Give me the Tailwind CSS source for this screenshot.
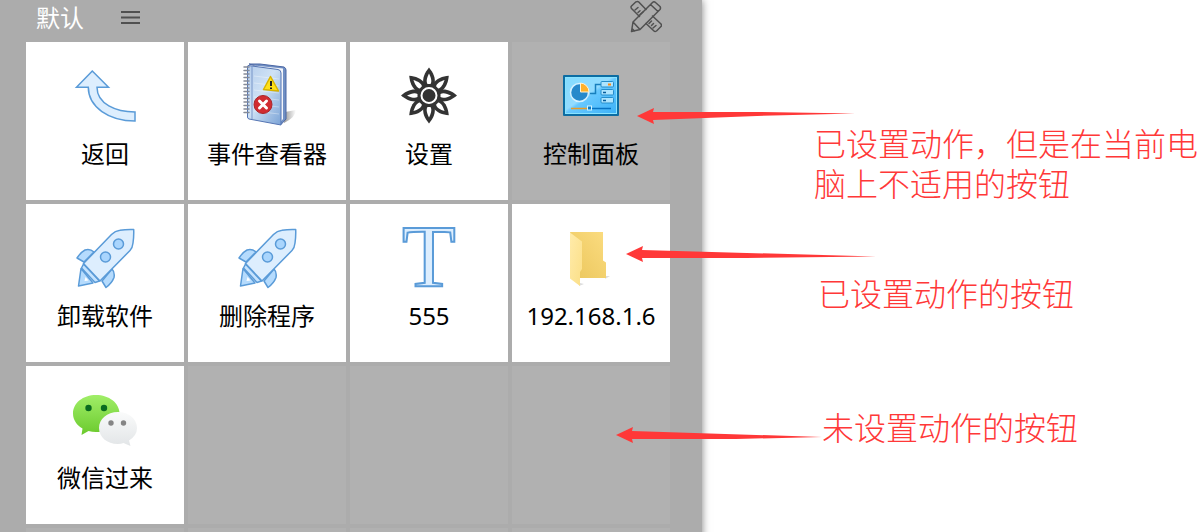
<!DOCTYPE html>
<html lang="zh-CN">
<head>
    <meta charset="UTF-8">
    <meta name="viewport" content="width=device-width, initial-scale=1.0">
    <title>默认</title>
    <script src="https://cdn.jsdelivr.net/npm/@tailwindcss/browser@4"></script>
</head>
<body class="bg-white font-['Noto_Sans','Noto_Sans_CJK_SC',sans-serif]">
    <main class="relative flex h-screen overflow-hidden">
        <!-- button panel -->
        <section class="shrink-0 self-start bg-[#acacac] pl-[26px] pr-8 shadow-[0_0_8px_#00000080]">
            <header class="flex h-[42px] items-start justify-between pl-[10px] pr-2">
                <div class="flex items-center gap-9">
                    <h1 class="text-2xl leading-9 text-white">默认</h1>
                    <button aria-label="菜单">
                        <svg class="block" width="20" height="16" viewBox="0 0 20 16" stroke="#505050" stroke-width="2">
                            <path d="M1 2H20M1 7.500H20M1 13H20"/>
                        </svg>
                    </button>
                </div>
                <button aria-label="编辑">
                    <svg class="block" width="32" height="33" viewBox="0 0 32 33" fill="none" stroke="#505050" stroke-width="1.500" stroke-linejoin="round" stroke-linecap="round">
                        <path d="M9.500 16.500L1.500 8.500Q.5 7 1.500 6L6 1.800Q7.500 1 8.500 1.800L16 9.500M22.500 16L31 24Q32 25.500 31 26.500L26.500 31Q25 32 24 31L16 23.500"/>
                        <path d="M5 10L8 7.500M8 12.500L10 10.800M10 14.500L13 12M19 23.500L21.500 21M21.500 25.500L23.500 23.500M23 28L26 25.500"/>
                        <path d="M3 22L22.500 2.500Q24 1 25.500 2.500L30 6.500Q31 8 30 9.500L10 29.500L1.500 31.500ZM3 22L10 29.500M20.500 4.500L28 11.500M2 28.500L4.500 31"/>
                    </svg>
                </button>
            </header>
            <div class="grid grid-cols-[repeat(4,auto)] gap-1">
                <button class="flex size-[158px] flex-col items-center bg-white pt-[22px]">
                    <svg width="64" height="64" viewBox="0 0 64 64" fill="#ddeefe" stroke="#5a9bd8" stroke-width="1.500">
                        <path d="M19.300 7L3.500 23.300H15.300C15.300 43 36 57 62 57V48C43 48 24 40 24 23.300H35.500Z"/>
                    </svg>
                    <span class="mt-2.5 text-2xl">返回</span>
                </button>
                <button class="flex size-[158px] flex-col items-center bg-white pt-[22px]">
                    <svg class="overflow-visible" width="64" height="64" viewBox="0 0 64 64">
                        <defs>
                            <linearGradient id="cover" x1="0" y1="0" x2="1" y2="1">
                                <stop offset="0" stop-color="#b5cdec"/><stop offset=".45" stop-color="#cfe2f5"/><stop offset="1" stop-color="#7ba3d6"/>
                            </linearGradient>
                            <linearGradient id="shade">
                                <stop offset="0" stop-color="#999"/><stop offset="1" stop-color="#fff"/>
                            </linearGradient>
                        </defs>
                        <path d="M50 48L61 46Q61 53 49 59Z" fill="url(#shade)"/>
                        <path d="M14 0H25L49 3Q51 4 51 6V55L46 60.500L42 58V8Z" fill="#7190c4" stroke="#4a66a4"/>
                        <path d="M18 1.500L48 4.500V55L45.500 58V10Z" fill="#f3f5fa"/>
                        <path d="M13 1.500L43 5.500Q46 6 46 9V61L14 55Q12.500 54.500 12.500 53V2Z" fill="url(#cover)" stroke="#5575b3"/>
                        <path d="M17 2V55" stroke="#7896c9"/>
                        <path d="M19 12L44 15M19 19L44 22M19 26L44 29M19 33L44 36M19 40L44 43M19 47L44 50" stroke="#fff" stroke-opacity=".35"/>
                        <path d="M9 3H14M9 6.500H14M9 10H14M9 13.500H14M9 17H14M9 20.500H14M9 24H14M9 27.500H14M9 31H14M9 34.500H14M9 38H14M9 41.500H14M9 45H14M9 48.500H14" stroke="#858b98" stroke-width="1.500" stroke-linecap="round"/>
                        <path d="M35.500 12.500L28.500 25.500L43.500 27Z" fill="#ffe11a" stroke="#d8b300" stroke-width="1.500" stroke-linejoin="round"/>
                        <path d="M36 17V22M36 23.500V25" stroke="#222" stroke-width="2"/>
                        <circle cx="28" cy="40.500" r="9" fill="#d12c31" stroke="#a92529"/>
                        <path d="M24.500 37L31.500 44M31.500 37L24.500 44" stroke="#fff" stroke-width="3" stroke-linecap="round"/>
                    </svg>
                    <span class="mt-2.5 text-2xl">事件查看器</span>
                </button>
                <button class="flex size-[158px] flex-col items-center bg-white pt-[22px]">
                    <svg width="64" height="64" viewBox="0 0 64 64">
                        <defs>
                            <path id="petal" d="M0 -28C4 -23 7 -18 5.500 -10L0 0L-5.500 -10C-7 -18 -4 -23 0 -28Z" fill="#333"/>
                            <path id="slit" d="M0 -22C2 -18 3.200 -14 1.500 -11.500H-1.500C-3.200 -14 -2 -18 0 -22Z" fill="#fff"/>
                        </defs>
                        <g transform="translate(32 31.500)">
                            <use href="#petal"/><use href="#petal" transform="rotate(45)"/><use href="#petal" transform="rotate(90)"/><use href="#petal" transform="rotate(135)"/>
                            <use href="#petal" transform="rotate(180)"/><use href="#petal" transform="rotate(225)"/><use href="#petal" transform="rotate(270)"/><use href="#petal" transform="rotate(315)"/>
                            <circle r="12" fill="#333"/>
                            <use href="#slit"/><use href="#slit" transform="rotate(45)"/><use href="#slit" transform="rotate(90)"/><use href="#slit" transform="rotate(135)"/>
                            <use href="#slit" transform="rotate(180)"/><use href="#slit" transform="rotate(225)"/><use href="#slit" transform="rotate(270)"/><use href="#slit" transform="rotate(315)"/>
                            <circle r="7.500" fill="#333" stroke="#fff" stroke-width="2"/>
                        </g>
                    </svg>
                    <span class="mt-2.5 text-2xl">设置</span>
                </button>
                <!-- set, but not available on this computer -->
                <button class="flex size-[158px] flex-col items-center bg-[#b1b1b1] pt-[22px]">
                    <svg width="64" height="64" viewBox="0 0 64 64" fill="none">
                        <defs>
                            <linearGradient id="screen" x1="0" y1="0" x2="1" y2="1">
                                <stop offset="0" stop-color="#83dcff"/><stop offset=".45" stop-color="#93dcff"/><stop offset=".5" stop-color="#67c8ff"/><stop offset="1" stop-color="#3cb2f8"/>
                            </linearGradient>
                        </defs>
                        <rect x="4" y="11" width="56" height="41" rx="1" fill="#0c6da3"/>
                        <rect x="6.500" y="13.500" width="51" height="36" fill="url(#screen)" stroke="#8ae4ff"/>
                        <circle cx="20.500" cy="28.500" r="9" fill="#2789cb" stroke="#d5f1ff" stroke-width="1.500"/>
                        <path d="M21.500 28V19A9 9 0 0 1 30 28Z" fill="#ffb129" stroke="#fff3d4"/>
                        <path d="M31 29.500H36.500V20.500H42" stroke="#187fbd" stroke-width="1.500"/>
                        <g fill="#aee5ff" stroke="#268ecb">
                            <rect x="42" y="17.500" width="12.500" height="5.500" rx="1"/>
                            <rect x="42" y="25.500" width="12.500" height="5.500" rx="1"/>
                            <rect x="42" y="33.500" width="12.500" height="5.500" rx="1"/>
                        </g>
                        <path d="M49 20.500H52" stroke="#ff8a13" stroke-width="2"/>
                        <path d="M44 28.500H47M44 36.500H47" stroke="#075d9c" stroke-width="1.500"/>
                        <path d="M12 44.500H28" stroke="#e89b27" stroke-width="1.500"/>
                        <path d="M33 44.500H52" stroke="#0873c2" stroke-width="1.500"/>
                        <rect x="28.500" y="42" width="4" height="4" fill="#087cca" stroke="#d4f4ff"/>
                    </svg>
                    <span class="mt-2.5 text-2xl">控制面板</span>
                </button>

                <button class="flex size-[158px] flex-col items-center bg-white pt-[22px]">
                    <svg width="64" height="64" viewBox="0 0 64 64" stroke="#5a9bd8" stroke-width="1.500" stroke-linejoin="round">
                        <g id="rocket">
                            <path d="M8 42.500L5.500 60L20 57Z" fill="#b5dbfd"/>
                            <path d="M12.500 51L11.500 55L15.500 54.500Z" fill="#fff" stroke="none"/>
                            <path d="M21 26Q17 22.500 12 24Q8 26 4 32L11 36ZM39 43Q42 46 41 51.500Q39 57 33 61.500L29 55Z" fill="#b5dbfd"/>
                            <path d="M10.500 38L8.500 42L22 56.500L26.500 55Z" fill="#c5e3fe"/>
                            <path d="M10.500 37.500L38.500 8.500Q42 5 47 4.300Q53 3.200 60.700 3.500Q61 10 60 17Q59.500 22 57 24.500L27 55Z" fill="#ddeefe"/>
                            <circle cx="45.500" cy="18" r="5" fill="#a9d5fd"/>
                            <circle cx="32.500" cy="31" r="5" fill="#a9d5fd"/>
                        </g>
                    </svg>
                    <span class="mt-2.5 text-2xl">卸载软件</span>
                </button>
                <button class="flex size-[158px] flex-col items-center bg-white pt-[22px]">
                    <svg width="64" height="64" viewBox="0 0 64 64" stroke="#5a9bd8" stroke-width="1.500" stroke-linejoin="round">
                        <use href="#rocket"/>
                    </svg>
                    <span class="mt-2.5 text-2xl">删除程序</span>
                </button>
                <button class="flex size-[158px] flex-col items-center bg-white pt-[22px]">
                    <svg class="overflow-visible" width="64" height="64" viewBox="0 0 64 64" aria-hidden="true">
                        <text class="font-['Liberation_Serif',serif]" x="32" y="60" text-anchor="middle" font-size="88" fill="#ddeefe" stroke="#5a9bd8" stroke-width="2">T</text>
                    </svg>
                    <span class="mt-2.5 text-2xl">555</span>
                </button>
                <button class="flex size-[158px] flex-col items-center bg-white pt-[22px]">
                    <svg width="64" height="64" viewBox="0 0 64 64">
                        <defs>
                            <linearGradient id="back" x1="0" y1="1" x2="1" y2="0">
                                <stop offset="0" stop-color="#ebc65c"/><stop offset="1" stop-color="#fbdc80"/>
                            </linearGradient>
                            <linearGradient id="front" x1="0" y1="0" x2="1" y2="1">
                                <stop offset="0" stop-color="#ffebaa"/><stop offset="1" stop-color="#fbdf87"/>
                            </linearGradient>
                        </defs>
                        <path d="M47 50L51 50L46 53ZM21 57L25 58L20 60Z" fill="#ddd"/>
                        <path d="M11 6H44V34.500L47 36.500V52H20Z" fill="url(#back)"/>
                        <path d="M11 6.500L23 15.500V43L21 46V60L11 52.500Z" fill="url(#front)"/>
                    </svg>
                    <span class="mt-2.5 text-2xl">192.168.1.6</span>
                </button>

                <button class="flex size-[158px] flex-col items-center bg-white pt-[22px]">
                    <svg width="64" height="64" viewBox="0 0 64 64">
                        <defs>
                            <linearGradient id="green" x1="0" y1="0" x2="0" y2="1">
                                <stop offset="0" stop-color="#a0ee68"/><stop offset="1" stop-color="#6bca2d"/>
                            </linearGradient>
                            <linearGradient id="grey" x1="0" y1="0" x2="0" y2="1">
                                <stop offset="0" stop-color="#fafbfb"/><stop offset="1" stop-color="#e2e5e7"/>
                            </linearGradient>
                        </defs>
                        <path d="M23 7C36 7 46.500 15 46.500 25.500S36 44 23 44Q19 44 15.500 43L8.500 47L9.500 40.500C4 37.500 0 32 0 25.500C0 15 10 7 23 7Z" fill="url(#green)"/>
                        <circle cx="15.500" cy="20" r="3.200" fill="#096b20"/>
                        <circle cx="31" cy="20" r="3.200" fill="#096b20"/>
                        <path d="M45 24C56 24 64 31 64 40Q64 47.500 56 52.500L57.500 58L50.500 55Q48 56 45 56C34 56 26 49 26 40S34 24 45 24Z" fill="url(#grey)"/>
                        <circle cx="38" cy="35" r="2.700" fill="#858585"/>
                        <circle cx="50.500" cy="35" r="2.700" fill="#858585"/>
                    </svg>
                    <span class="mt-2.5 text-2xl">微信过来</span>
                </button>
                <!-- empty slots -->
                <button class="size-[158px] bg-[#b1b1b1]" aria-label="空按钮"></button>
                <button class="size-[158px] bg-[#b1b1b1]" aria-label="空按钮"></button>
                <button class="size-[158px] bg-[#b1b1b1]" aria-label="空按钮"></button>

                <button class="size-[158px] bg-[#b1b1b1]" aria-label="空按钮"></button>
                <button class="size-[158px] bg-[#b1b1b1]" aria-label="空按钮"></button>
                <button class="size-[158px] bg-[#b1b1b1]" aria-label="空按钮"></button>
                <button class="size-[158px] bg-[#b1b1b1]" aria-label="空按钮"></button>
            </div>
        </section>

        <!-- notes -->
        <section class="min-w-0 flex-1 pl-28 pt-[122px] text-[32px] font-light leading-10 text-[#ff3838] font-['Noto_Sans_CJK_SC',serif]">
            <p>已设置动作，但是在当前电脑上不适用的按钮</p>
            <p class="mt-[70px] pl-1">已设置动作的按钮</p>
            <p class="mt-[94px] pl-2">未设置动作的按钮</p>
        </section>

        <!-- arrows over the panel edge -->
        <svg class="absolute left-[637px] top-[108px]" width="218" height="16" viewBox="0 0 218 16" fill="#ff3838">
            <path d="M0 8L17 0L16 4L120 4L218 5.500L120 8L16 12L17 16Z"/>
        </svg>
        <svg class="absolute left-[626px] top-[246px]" width="250" height="16" viewBox="0 0 250 16" fill="#ff3838">
            <path d="M0 8L17 0L16 4L250 10.500L120 12L16 12L17 16Z"/>
        </svg>
        <svg class="absolute left-[616px] top-[427px]" width="206" height="16" viewBox="0 0 206 16" fill="#ff3838">
            <path d="M0 8L17 0L16 4L206 10L120 12L16 12L17 16Z"/>
        </svg>
    </main>
</body>
</html>
